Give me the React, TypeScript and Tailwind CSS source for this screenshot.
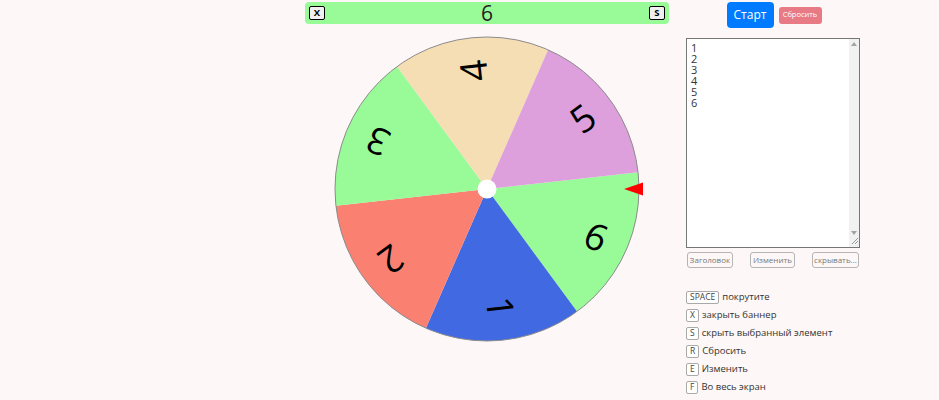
import React from "react";

type Segment = { label: string; color: string };

const segments: Segment[] = [
  { label: "6", color: "#98fb98" },
  { label: "1", color: "#4169e1" },
  { label: "2", color: "#fa8072" },
  { label: "3", color: "#98fb98" },
  { label: "4", color: "#f5deb3" },
  { label: "5", color: "#dda0dd" },
];

const CX = 182;
const CY = 161;
const R = 152;
const START = -6.3;

function polar(angle: number, radius: number): [number, number] {
  const rad = (angle * Math.PI) / 180;
  return [CX + radius * Math.cos(rad), CY + radius * Math.sin(rad)];
}

function Wheel() {
  const step = 360 / segments.length;
  return (
    <svg width={364} height={330} viewBox="0 0 364 330" className="block">
      {segments.map((s, i) => {
        const a0 = START + i * step;
        const a1 = a0 + step;
        const [x0, y0] = polar(a0, R);
        const [x1, y1] = polar(a1, R);
        return (
          <path
            key={i}
            d={`M${CX} ${CY} L${x0} ${y0} A${R} ${R} 0 0 1 ${x1} ${y1} Z`}
            fill={s.color}
          />
        );
      })}
      <circle cx={CX} cy={CY} r={R} fill="none" stroke="#8c8c8c" strokeWidth={1} />
      {segments.map((s, i) => {
        const mid = START + i * step + step / 2;
        return (
          <text
            key={`t${i}`}
            x={CX + 119}
            y={CY}
            dy="0.36em"
            transform={`rotate(${mid} ${CX} ${CY})`}
            textAnchor="middle"
            fill="#000"
            className="font-['Open_Sans',sans-serif] text-[37px]"
          >
            {s.label}
          </text>
        );
      })}
      <circle cx={CX} cy={CY} r={9.5} fill="#ffffff" />
      <polygon points="319,161 338,154.5 338,167.5" fill="#ff0000" />
    </svg>
  );
}

function Kbd({ children }: { children: React.ReactNode }) {
  return (
    <span className="inline-flex items-center justify-center h-[13px] px-[3px] min-w-[12px] border border-[#a9a9a9] rounded-[2px] bg-white text-[8.5px] leading-none text-[#444]">
      {children}
    </span>
  );
}

const shortcuts: { key: string; label: string }[] = [
  { key: "SPACE", label: "покрутите" },
  { key: "X", label: "закрыть баннер" },
  { key: "S", label: "скрыть выбранный элемент" },
  { key: "R", label: "Сбросить" },
  { key: "E", label: "Изменить" },
  { key: "F", label: "Во весь экран" },
];

export default function App() {
  return (
    <div className="w-[939px] h-[400px] bg-[#fdf7f7] flex overflow-hidden font-['Open_Sans','Noto_Sans',sans-serif]">
      <div className="w-[305px] shrink-0" />

      {/* wheel column */}
      <div className="w-[364px] shrink-0 flex flex-col pt-[2px]">
        <div className="h-[22px] bg-[#98fb98] rounded-[4px] flex items-center justify-between px-[4px]">
          <span className="w-[16px] h-[14px] border border-black rounded-[2px] bg-[#f0f0f0] flex items-center justify-center text-[9.5px] font-bold leading-none text-black">
            X
          </span>
          <span className="text-[21px] leading-none text-[#222]">6</span>
          <span className="w-[16px] h-[14px] border border-black rounded-[2px] bg-[#f0f0f0] flex items-center justify-center text-[9.5px] font-bold leading-none text-black">
            S
          </span>
        </div>
        <div className="mt-[4px]">
          <Wheel />
        </div>
      </div>

      {/* controls column */}
      <div className="w-[174px] shrink-0 ml-[17px] flex flex-col pt-[2px]">
        <div className="flex items-center justify-center gap-[5px] pl-[2px]">
          <button className="h-[26px] w-[47px] rounded-[4px] bg-[#007bff] text-white text-[12px] leading-none">
            Старт
          </button>
          <button className="h-[17px] w-[43px] rounded-[3px] bg-[#e77a84] text-white text-[7.5px] leading-none">
            Сбросить
          </button>
        </div>

        <div className="mt-[10px] h-[210px] border border-[#767676] bg-white flex">
          <textarea
            readOnly
            className="flex-1 resize-none outline-none border-0 bg-transparent px-[4px] pt-[4px] text-[11px] leading-[10.9px] text-[#333] overflow-hidden"
            value={"1\n2\n3\n4\n5\n6"}
          />
          <div className="w-[10px] bg-[#f1f1f1] flex flex-col justify-between items-center py-[3px]">
            <svg width="6" height="4" viewBox="0 0 6 4">
              <polygon points="3,0 6,4 0,4" fill="#a3a3a3" />
            </svg>
            <div className="flex flex-col items-center gap-[2px]">
              <svg width="6" height="4" viewBox="0 0 6 4">
                <polygon points="0,0 6,0 3,4" fill="#a3a3a3" />
              </svg>
              <svg width="7" height="7" viewBox="0 0 7 7">
                <line x1="1" y1="7" x2="7" y2="1" stroke="#999" strokeWidth="1" />
                <line x1="4" y1="7" x2="7" y2="4" stroke="#999" strokeWidth="1" />
              </svg>
            </div>
          </div>
        </div>

        <div className="mt-[4px] flex justify-between pl-[1px] pr-[1px]">
          <button className="h-[16px] w-[46px] border border-[#b5b5b5] rounded-[3px] text-[8px] leading-none text-[#777] bg-transparent">
            Заголовок
          </button>
          <button className="h-[16px] w-[45px] border border-[#b5b5b5] rounded-[3px] text-[8px] leading-none text-[#777] bg-transparent">
            Изменить
          </button>
          <button className="h-[16px] w-[47px] border border-[#b5b5b5] rounded-[3px] text-[8px] leading-none text-[#777] bg-transparent">
            скрывать...
          </button>
        </div>

        <ul className="mt-[20px] flex flex-col">
          {shortcuts.map((s) => (
            <li key={s.key} className="h-[18px] flex items-center gap-[3px] text-[9.5px] text-[#333]">
              <Kbd>{s.key}</Kbd>
              <span>{s.label}</span>
            </li>
          ))}
        </ul>
      </div>
    </div>
  );
}
